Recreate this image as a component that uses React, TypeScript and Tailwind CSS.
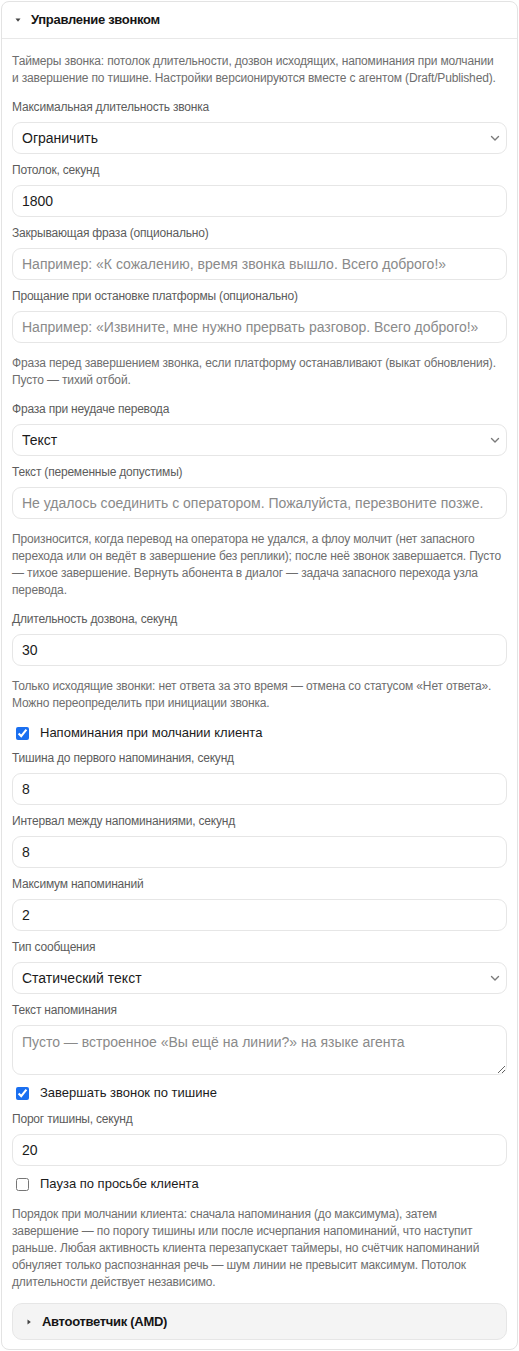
import React from "react";

const sans = "font-['Liberation_Sans',Arial,sans-serif]";

function Label({ children }: { children: React.ReactNode }) {
  return <div className={`${sans} text-[12px] leading-[17px] tracking-[-0.2px] text-[#5c5c5c]`}>{children}</div>;
}

// Help text, broken into the same lines the panel shows
function Hint({ lines }: { lines: string[] }) {
  return (
    <p className={`${sans} my-1 text-[12px] leading-[17px] tracking-[-0.15px] text-[#6e6e6e]`}>
      {lines.map((l, i) => (
        <React.Fragment key={i}>
          {l}
          {i < lines.length - 1 && <br />}
        </React.Fragment>
      ))}
    </p>
  );
}

const boxCls =
  "h-8 w-full rounded-[9px] border border-[#e6e6e6] bg-white px-[9px] text-[14px] text-[#1b1b1b] outline-none placeholder:text-[#8a8a8a] font-['Liberation_Sans',Arial,sans-serif]";

function TextField({ label, value, placeholder }: { label: string; value?: string; placeholder?: string }) {
  return (
    <div className="flex flex-col gap-[6px]">
      <Label>{label}</Label>
      <input className={boxCls} defaultValue={value} placeholder={placeholder} />
    </div>
  );
}

function SelectField({ label, value }: { label: string; value: string }) {
  return (
    <div className="flex flex-col gap-[6px]">
      <Label>{label}</Label>
      <div className="relative">
        <select className={`${boxCls} appearance-none`} defaultValue={value}>
          <option>{value}</option>
        </select>
        <svg
          className="pointer-events-none absolute right-[6px] top-1/2 -translate-y-1/2"
          width="12"
          height="12"
          viewBox="0 0 12 12"
          fill="none"
        >
          <path d="M2.5 4.5 6 8l3.5-3.5" stroke="#7a7a7a" strokeWidth="1.4" strokeLinecap="round" strokeLinejoin="round" />
        </svg>
      </div>
    </div>
  );
}

function Check({ label, checked, tall }: { label: string; checked?: boolean; tall?: boolean }) {
  return (
    <label
      className={`${sans} flex ${tall ? "h-5" : "h-[18px]"} items-center gap-[11px] pl-[4px] text-[13px] text-[#1b1b1b]`}
    >
      <input type="checkbox" defaultChecked={checked} className="m-0 h-[13px] w-[13px] accent-[#1a6ff0]" />
      <span>{label}</span>
    </label>
  );
}

function Caret({ className = "" }: { className?: string }) {
  return (
    <svg width="6" height="6" viewBox="0 0 6 6" className={className}>
      <path d="M0.5 1.5h5L3 4.8z" fill="#444" />
    </svg>
  );
}

export default function App() {
  return (
    <div className="bg-white p-px">
      <section className="overflow-hidden rounded-[8px] border border-[#e3e3e3] bg-white">
        <header className="flex h-[37px] items-center gap-[10px] border-b border-[#e8e8e8] pl-[13px]">
          <Caret />
          <span className={`${sans} text-[13px] font-bold tracking-[-0.3px] text-[#151515]`}>Управление звонком</span>
        </header>

        <div className="flex flex-col gap-2 px-[10px] pb-[9px] pt-[10px]">
          <Hint
            lines={[
              "Таймеры звонка: потолок длительности, дозвон исходящих, напоминания при молчании",
              "и завершение по тишине. Настройки версионируются вместе с агентом (Draft/Published).",
            ]}
          />

          <SelectField label="Максимальная длительность звонка" value="Ограничить" />
          <TextField label="Потолок, секунд" value="1800" />
          <TextField
            label="Закрывающая фраза (опционально)"
            placeholder="Например: «К сожалению, время звонка вышло. Всего доброго!»"
          />
          <TextField
            label="Прощание при остановке платформы (опционально)"
            placeholder="Например: «Извините, мне нужно прервать разговор. Всего доброго!»"
          />
          <Hint
            lines={[
              "Фраза перед завершением звонка, если платформу останавливают (выкат обновления).",
              "Пусто — тихий отбой.",
            ]}
          />

          <SelectField label="Фраза при неудаче перевода" value="Текст" />
          <TextField
            label="Текст (переменные допустимы)"
            placeholder="Не удалось соединить с оператором. Пожалуйста, перезвоните позже."
          />
          <Hint
            lines={[
              "Произносится, когда перевод на оператора не удался, а флоу молчит (нет запасного",
              "перехода или он ведёт в завершение без реплики); после неё звонок завершается. Пусто",
              "— тихое завершение. Вернуть абонента в диалог — задача запасного перехода узла",
              "перевода.",
            ]}
          />

          <TextField label="Длительность дозвона, секунд" value="30" />
          <Hint
            lines={[
              "Только исходящие звонки: нет ответа за это время — отмена со статусом «Нет ответа».",
              "Можно переопределить при инициации звонка.",
            ]}
          />

          <Check label="Напоминания при молчании клиента" checked />
          <TextField label="Тишина до первого напоминания, секунд" value="8" />
          <TextField label="Интервал между напоминаниями, секунд" value="8" />
          <TextField label="Максимум напоминаний" value="2" />
          <SelectField label="Тип сообщения" value="Статический текст" />
          <div className="flex flex-col gap-[6px]">
            <Label>Текст напоминания</Label>
            <textarea
              className={`${boxCls} h-[50px] resize-y py-[6px] leading-[20px]`}
              placeholder="Пусто — встроенное «Вы ещё на линии?» на языке агента"
            />
          </div>

          <Check label="Завершать звонок по тишине" checked tall />
          <TextField label="Порог тишины, секунд" value="20" />
          <Check label="Пауза по просьбе клиента" tall />
          <Hint
            lines={[
              "Порядок при молчании клиента: сначала напоминания (до максимума), затем",
              "завершение — по порогу тишины или после исчерпания напоминаний, что наступит",
              "раньше. Любая активность клиента перезапускает таймеры, но счётчик напоминаний",
              "обнуляет только распознанная речь — шум линии не превысит максимум. Потолок",
              "длительности действует независимо.",
            ]}
          />

          <div className="flex h-[37px] items-center gap-[10px] rounded-[10px] border border-[#e6e6e6] bg-[#f4f4f4] pl-[13px]">
            <Caret className="-rotate-90" />
            <span className={`${sans} text-[13px] font-bold tracking-[-0.3px] text-[#151515]`}>Автоответчик (AMD)</span>
          </div>
        </div>
      </section>
    </div>
  );
}
